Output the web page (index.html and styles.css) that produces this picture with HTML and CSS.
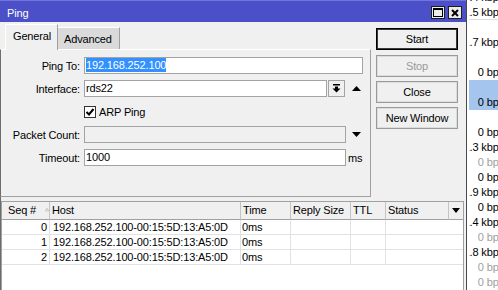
FILE: index.html
```html
<!DOCTYPE html>
<html>
<head>
<meta charset="utf-8">
<link rel="stylesheet" href="styles.css">
</head>
<body>
<div class="screen">
  <div class="win">
    <div class="titlebar">
      <span class="title">Ping</span>
      <div class="tb-btns">
        <span class="tb-btn"><svg width="10" height="9" viewBox="0 0 10 9"><rect x="0.5" y="0.5" width="9" height="8" fill="none" stroke="#000"/><rect x="0" y="0" width="10" height="2" fill="#000"/></svg></span>
        <span class="tb-btn"><svg width="8" height="8" viewBox="0 0 8 8"><path d="M1 1L7 7M7 1L1 7" stroke="#000" stroke-width="2"/></svg></span>
      </div>
    </div>
    <div class="main">
      <div class="left">
        <div class="tabs">
          <div class="tab active">General</div>
          <div class="tab inactive">Advanced</div>
        </div>
        <div class="panel">
          <div class="row">
            <span class="lbl">Ping To:</span>
            <div class="input w-ping"><span class="sel">192.168.252.100</span></div>
          </div>
          <div class="row">
            <span class="lbl">Interface:</span>
            <div class="input w-if">rds22</div>
            <span class="dd-btn"><svg width="9" height="9" viewBox="0 0 9 9"><rect x="1" y="0" width="7" height="1.5" fill="#000"/><rect x="3" y="2.5" width="3" height="2.5" fill="#000"/><path d="M0.5 4.5h8L4.5 8.5z" fill="#000"/></svg></span>
            <span class="tri tri-if"><svg width="9" height="5" viewBox="0 0 9 5"><path d="M0 5h9L4.5 0z" fill="#000"/></svg></span>
          </div>
          <div class="row">
            <span class="lbl"></span>
            <span class="chk"><svg width="10" height="10" viewBox="0 0 10 10"><path d="M1.5 5L4 7.5L8.5 2" stroke="#000" stroke-width="2" fill="none"/></svg></span>
            <span class="chk-lbl">ARP Ping</span>
          </div>
          <div class="row">
            <span class="lbl">Packet Count:</span>
            <div class="input w-pc disabled"></div>
            <span class="tri tri-pc"><svg width="9" height="5" viewBox="0 0 9 5"><path d="M0 0h9L4.5 5z" fill="#000"/></svg></span>
          </div>
          <div class="row">
            <span class="lbl">Timeout:</span>
            <div class="input w-pc">1000</div>
            <span class="unit">ms</span>
          </div>
        </div>
      </div>
      <div class="btns">
        <div class="btn default">Start</div>
        <div class="btn off">Stop</div>
        <div class="btn">Close</div>
        <div class="btn">New Window</div>
      </div>
    </div>
    <div class="table-wrap">
      <div class="table">
        <div class="thead">
          <div class="th seq">Seq #<svg class="sort" width="6" height="5" viewBox="0 0 6 5"><path d="M0.5 4.5h5L3 0.5z" fill="none" stroke="#b4b4b4"/></svg></div>
          <div class="th">Host</div>
          <div class="th">Time</div>
          <div class="th">Reply Size</div>
          <div class="th">TTL</div>
          <div class="th">Status</div>
          <div class="th menu"><svg width="8" height="5" viewBox="0 0 8 5"><path d="M0 0h8L4 5z" fill="#000"/></svg></div>
        </div>
        <div class="trow">
          <div class="td num">0</div>
          <div class="td host">192.168.252.100-00:15:5D:13:A5:0D</div>
          <div class="td">0ms</div>
          <div class="td"></div>
          <div class="td"></div>
          <div class="td status"></div>
        </div>
        <div class="trow">
          <div class="td num">1</div>
          <div class="td host">192.168.252.100-00:15:5D:13:A5:0D</div>
          <div class="td">0ms</div>
          <div class="td"></div>
          <div class="td"></div>
          <div class="td status"></div>
        </div>
        <div class="trow">
          <div class="td num">2</div>
          <div class="td host">192.168.252.100-00:15:5D:13:A5:0D</div>
          <div class="td">0ms</div>
          <div class="td"></div>
          <div class="td"></div>
          <div class="td status"></div>
        </div>
      </div>
    </div>
  </div>
  <div class="strip">
    <div class="strip-list">
      <div class="srow"><span>4.4 kbps</span></div>
      <div class="srow line"><span>1.5 kbps</span></div>
      <div class="srow"></div>
      <div class="srow"><span>1.7 kbps</span></div>
      <div class="srow"></div>
      <div class="srow"><span>0 bps</span></div>
      <div class="srow selrow"></div>
      <div class="srow selrow"><span>0 bps</span></div>
      <div class="srow"></div>
      <div class="srow"><span>0 bps</span></div>
      <div class="srow"><span>1.3 kbps</span></div>
      <div class="srow gray"><span>0 bps</span></div>
      <div class="srow"><span>0 bps</span></div>
      <div class="srow"><span>1.9 kbps</span></div>
      <div class="srow"><span>0 bps</span></div>
      <div class="srow"><span>1.4 kbps</span></div>
      <div class="srow gray"><span>0 bps</span></div>
      <div class="srow"><span>1.8 kbps</span></div>
      <div class="srow gray"><span>0 bps</span></div>
      <div class="srow gray"><span>0 bps</span></div>
    </div>
  </div>
</div>
</body>
</html>
```
FILE: styles.css
```css
* { box-sizing: border-box; }
html, body {
  margin: 0;
  padding: 0;
  width: 498px;
  height: 290px;
  overflow: hidden;
  background: #fff;
}
body {
  font-family: "Liberation Sans", Arial, sans-serif;
  font-size: 11px;
  letter-spacing: -0.15px;
  color: #000;
}
.screen {
  display: flex;
  height: 290px;
}
.win {
  flex: none;
  width: 467px;
  height: 290px;
  display: flex;
  flex-direction: column;
  background: #f0f0f0;
  border-right: 1px solid #4a4a4a;
}
.titlebar {
  flex: none;
  height: 22px;
  background: #4b50c8;
  border-top: 1px solid #7276da;
  display: flex;
  justify-content: space-between;
  align-items: flex-start;
  padding: 0 4px 0 7px;
}
.title {
  color: #fff;
  line-height: 16px;
  padding-top: 4px;
}
.tb-btns {
  display: flex;
  gap: 3px;
  padding-top: 5px;
}
.tb-btn {
  width: 14px;
  height: 13px;
  border: 1px solid #1e1e1e;
  background: #ececec;
  display: flex;
  align-items: center;
  justify-content: center;
}
.main {
  flex: none;
  height: 175px;
  display: flex;
}
.left {
  width: 371px;
  display: flex;
  flex-direction: column;
}
.tabs {
  height: 27px;
  display: flex;
  align-items: flex-end;
  padding-left: 5px;
  position: relative;
  z-index: 1;
}
.tab {
  line-height: 14px;
  white-space: nowrap;
}
.tab.active {
  width: 53px;
  height: 26px;
  margin-bottom: -1px;
  background: #f0f0f0;
  border-top: 1px solid #fff;
  border-left: 1px solid #fff;
  border-right: 1px solid #a0a0a0;
  padding: 4px 0 0 7px;
}
.tab.inactive {
  width: 62px;
  height: 22px;
  background: #dadada;
  border-top: 1px solid #fff;
  border-right: 1px solid #a0a0a0;
  padding: 4px 0 0 6px;
}
.panel {
  height: 148px;
  background: #f0f0f0;
  border-top: 1px solid #fff;
  border-left: 1px solid #6d6d6d;
  border-right: 1px solid #a0a0a0;
  border-bottom: 1px solid #a0a0a0;
  padding-top: 7px;
  display: flex;
  flex-direction: column;
  gap: 6px;
}
.row {
  display: flex;
  align-items: center;
  height: 17px;
}
.lbl {
  flex: none;
  width: 79px;
  margin-right: 4px;
  text-align: right;
  white-space: nowrap;
}
.input {
  flex: none;
  height: 17px;
  border: 1px solid #a3a3a3;
  background: #fff;
  padding-left: 1px;
  line-height: 14px;
  white-space: nowrap;
  overflow: hidden;
}
.input.disabled { background: #f0f0f0; }
.w-ping { width: 279px; }
.w-if { width: 243px; }
.w-pc { width: 262px; }
.sel {
  display: inline-block;
  background: #3390ff;
  color: #fff;
  line-height: 14px;
}
.dd-btn {
  flex: none;
  width: 17px;
  height: 17px;
  margin-left: 1px;
  border: 1px solid #a3a3a3;
  background: #f0f0f0;
  display: flex;
  align-items: center;
  justify-content: center;
}
.tri {
  display: flex;
  align-items: center;
}
.tri-if { margin-left: 7px; }
.tri-pc { margin-left: 6px; }
.chk {
  flex: none;
  width: 12px;
  height: 12px;
  border: 1px solid #333;
  background: #fff;
  display: flex;
  align-items: center;
  justify-content: center;
  margin-top: 1px;
}
.chk-lbl { margin-left: 3px; }
.unit { margin-left: 2px; }
.btns {
  width: 95px;
  padding: 6px 0 0 5px;
  display: flex;
  flex-direction: column;
  gap: 4px;
}
.btn {
  width: 82px;
  height: 22px;
  border: 1px solid #9a9a9a;
  box-shadow: inset 0 0 0 1px #dcdcdc;
  display: flex;
  align-items: center;
  justify-content: center;
  white-space: nowrap;
}
.btn.default {
  border: 1px solid #000;
  box-shadow: inset 0 0 0 1px #3a3a3a;
  margin-bottom: 1px;
}
.btn.off { color: #9a9a9a; }
.table-wrap {
  flex: 1;
  display: flex;
  border-left: 1px solid #6d6d6d;
  padding: 4px 2px 0 0;
}
.table {
  flex: 1;
  background: #fff;
  border: 1px solid #a0a0a0;
  border-bottom: none;
}
.thead, .trow {
  display: grid;
  grid-template-columns: 48px 191px 50px 60px 35px 63px 14px;
}
.th {
  height: 18px;
  background: #f0f0f0;
  border-bottom: 1px solid #a0a0a0;
  border-right: 1px solid #c4c4c4;
  line-height: 17px;
  padding-left: 2px;
  white-space: nowrap;
  display: flex;
  align-items: center;
}
.th.seq { padding-left: 6px; }
.th.seq .sort { margin-left: 9px; margin-top: -2px; }
.th.menu {
  border-right: none;
  justify-content: center;
  padding-left: 0;
}
.td {
  height: 15px;
  border-bottom: 1px solid #e2e2e2;
  border-right: 1px solid #e2e2e2;
  line-height: 14px;
  padding-left: 1px;
  white-space: nowrap;
  overflow: hidden;
}
.td.num { text-align: right; padding-right: 2px; }
.td.host { padding-left: 3px; }
.td.status { grid-column: span 2; border-right: none; }
/* column of the list window behind; right-aligned values clipped at its left edge */
.strip {
  flex: none;
  width: 42px;
  background: #fff;
  border-left: 2px solid #fff;
  overflow: hidden;
}
.strip-list { margin-top: -10px; }
.srow {
  height: 15px;
  line-height: 15px;
  display: flex;
  justify-content: flex-end;
  padding-right: 5px;
  white-space: nowrap;
}
.srow span { flex: none; }
.srow.line { border-bottom: 1px solid #dcdcdc; }
.srow.selrow { background: #a4c5ee; }
.srow.gray { color: #a0a0a0; }
```
